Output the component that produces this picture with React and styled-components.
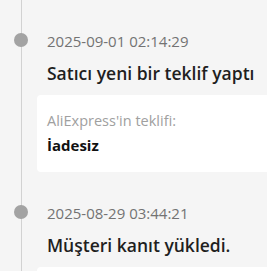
import React from "react";
import styled, { createGlobalStyle } from "styled-components";

const events = [
  {
    time: "2025-09-01 02:14:29",
    title: "Satıcı yeni bir teklif yaptı",
    label: "AliExpress'in teklifi:",
    value: "İadesiz",
  },
  {
    time: "2025-08-29 03:44:21",
    title: "Müşteri kanıt yükledi.",
    label: "",
    value: "",
  },
];

const App = () => {
  return (
    <>
      <GlobalStyle />
      <Timeline>
        {events.map((event, index) => {
          const { time, title, label, value } = event;
          return (
            <Item key={index}>
              <Dot />
              <Time>{time}</Time>
              <Title>{title}</Title>
              <Card>
                {label && <Label>{label}</Label>}
                {value && <Value>{value}</Value>}
              </Card>
            </Item>
          );
        })}
      </Timeline>
    </>
  );
};

const GlobalStyle = createGlobalStyle`
  html, body {
    margin: 0;
    padding: 0;
    background: #f5f5f5;
    overflow: hidden;
  }

  body {
    font-family: "Open Sans", "Liberation Sans", sans-serif;
  }
`;

const Timeline = styled.div`
  margin-left: 21px;
  width: 280px;
  border-left: 1px solid #d2d2d2;
  padding-left: 15px;
`;

const Item = styled.div`
  position: relative;
  padding-top: 31px;
`;

const Dot = styled.span`
  position: absolute;
  left: -23px;
  top: 33px;
  width: 14px;
  height: 14px;
  border-radius: 50%;
  background: #a3a3a3;
`;

const Time = styled.div`
  padding-left: 10px;
  font-size: 15px;
  line-height: 20px;
  color: #737373;
`;

const Title = styled.div`
  margin-top: 10px;
  padding-left: 10px;
  font-size: 17.5px;
  line-height: 24px;
  font-weight: 600;
  color: #1f1f1f;
`;

const Card = styled.div`
  margin-top: 10px;
  min-height: 77px;
  box-sizing: border-box;
  padding: 16px 10px 17px;
  background: #fff;
  border-radius: 4px;
`;

const Label = styled.div`
  font-size: 14.5px;
  line-height: 20px;
  color: #a0a0a0;
`;

const Value = styled.div`
  margin-top: 4px;
  font-size: 15px;
  line-height: 20px;
  font-weight: 700;
  color: #111;
`;

export default App;
